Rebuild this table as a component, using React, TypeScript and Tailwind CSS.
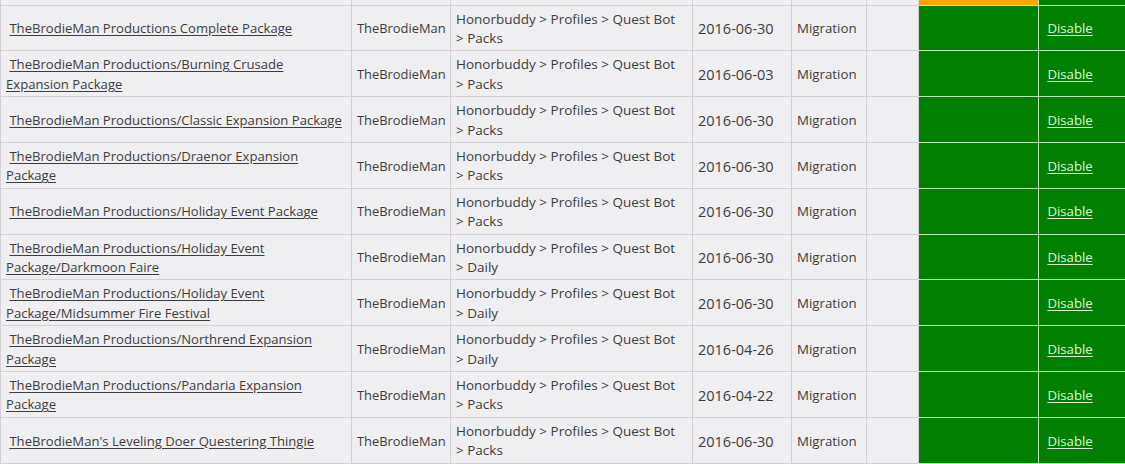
const rows = [
  { name: ['TheBrodieMan Productions Complete Package'], cat: 'Packs', date: '2016-06-30' },
  { name: ['TheBrodieMan Productions/Burning Crusade', 'Expansion Package'], cat: 'Packs', date: '2016-06-03' },
  { name: ['TheBrodieMan Productions/Classic Expansion Package'], cat: 'Packs', date: '2016-06-30' },
  { name: ['TheBrodieMan Productions/Draenor Expansion', 'Package'], cat: 'Packs', date: '2016-06-30' },
  { name: ['TheBrodieMan Productions/Holiday Event Package'], cat: 'Packs', date: '2016-06-30' },
  { name: ['TheBrodieMan Productions/Holiday Event', 'Package/Darkmoon Faire'], cat: 'Daily', date: '2016-06-30' },
  { name: ['TheBrodieMan Productions/Holiday Event', 'Package/Midsummer Fire Festival'], cat: 'Daily', date: '2016-06-30' },
  { name: ['TheBrodieMan Productions/Northrend Expansion', 'Package'], cat: 'Daily', date: '2016-04-26' },
  { name: ['TheBrodieMan Productions/Pandaria Expansion', 'Package'], cat: 'Packs', date: '2016-04-22' },
  { name: ["TheBrodieMan's Leveling Doer Questering Thingie"], cat: 'Packs', date: '2016-06-30' },
]

const cell = 'border border-[#d5cfd6] px-[5px] pt-[4px] pb-[2px] align-middle whitespace-nowrap overflow-hidden'
const green = 'border border-[#b9ecb4] bg-[#008000] px-[5px] pt-[4px] pb-[2px] align-middle whitespace-nowrap'

export default function App() {
  return (
    <div className="w-[1125px] h-[464px] overflow-hidden bg-[#efeef0]">
      <table
        className="w-[1125px] table-fixed border-collapse text-[13.2px] leading-[19.4px] text-[#3d3d3d]"
        style={{ fontFamily: '"Open Sans", "Noto Sans", sans-serif' }}
      >
        <colgroup>
          <col className="w-[351px]" />
          <col className="w-[99px]" />
          <col className="w-[242px]" />
          <col className="w-[99px]" />
          <col className="w-[75px]" />
          <col className="w-[52px]" />
          <col className="w-[120px]" />
          <col className="w-[87px]" />
        </colgroup>
        <tbody>
          {/* tail of the row above, cut off by the viewport */}
          <tr className="h-[5px]">
            <td className="border-x border-b border-[#d5cfd6] p-0" />
            <td className="border-x border-b border-[#d5cfd6] p-0" />
            <td className="border-x border-b border-[#d5cfd6] p-0" />
            <td className="border-x border-b border-[#d5cfd6] p-0" />
            <td className="border-x border-b border-[#d5cfd6] p-0" />
            <td className="border-x border-b border-[#d5cfd6] p-0" />
            <td className="border-x border-b border-[#b9ecb4] bg-[#ffa500] p-0" />
            <td className="border-x border-b border-[#b9ecb4] bg-[#008000] p-0" />
          </tr>
          {rows.map((r) => (
            <tr key={r.name.join(' ')}>
              <td className={`${cell} text-[13.1px]`}>
                {'\u00a0'}
                <a href="#" className="underline underline-offset-2">
                  {r.name[0]}
                  {r.name[1] && (
                    <>
                      <br />
                      {r.name[1]}
                    </>
                  )}
                </a>
              </td>
              <td className={`${cell} text-[12.9px]`}>TheBrodieMan</td>
              <td className={`${cell} text-[13.5px]`}>
                Honorbuddy &gt; Profiles &gt; Quest Bot
                <br />
                &gt; {r.cat}
              </td>
              <td className={`${cell} text-[14.5px]`}>{r.date}</td>
              <td className={`${cell} text-[13.3px]`}>Migration</td>
              <td className={cell} />
              <td className={green} />
              <td className={green}>
                {'\u00a0'}
                <a href="#" className="text-[#dcf7d8] underline underline-offset-2">Disable</a>
              </td>
            </tr>
          ))}
        </tbody>
      </table>
    </div>
  )
}
